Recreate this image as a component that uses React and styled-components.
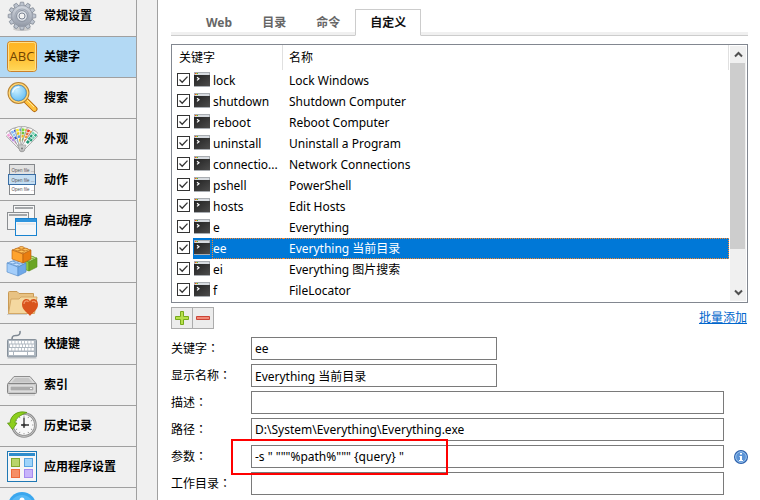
import React, { useState } from 'react';
import styled, { createGlobalStyle, css } from 'styled-components';

const palette = {
  panel: '#f0f0f0',
  line: '#a0a0a0',
  active: '#b3d9f4',
  frame: '#828790',
  input: '#7a7a7a',
  select: '#0078d7',
  dots: '#ff8728',
  link: '#0066cc',
};

const GlobalStyle = createGlobalStyle`
  * {
    box-sizing: border-box;
  }

  body {
    margin: 0;
    overflow: hidden;
    background: #fff;
    color: #000;
    font-family: 'Noto Sans', 'Noto Sans CJK SC', sans-serif;
    font-size: 12px;
    line-height: 16px;
  }

  button, input {
    font: inherit;
    color: inherit;
  }
`;

const Page = styled.div`
  display: flex;
  height: 100vh;
  overflow: hidden;
  background: ${palette.panel};
`;

/* ---------- sidebar ---------- */

const Sidebar = styled.nav`
  flex: none;
  width: 137px;
  overflow: hidden;
  border-right: 1px solid ${palette.line};
`;

const SideList = styled.ul`
  margin: -4px 0 0;
  padding: 0;
  list-style: none;
`;

const SideButton = styled.button`
  display: flex;
  align-items: center;
  gap: 6px;
  width: 100%;
  height: 41px;
  padding: 0 0 0 6px;
  border: 0;
  border-bottom: 1px solid ${palette.line};
  background: ${({ $active }) => ($active ? palette.active : 'transparent')};
  font-weight: 700;
  white-space: nowrap;

  svg {
    flex: none;
    font-weight: 400;
  }
`;

/* ---------- main panel ---------- */

const Main = styled.main`
  flex: 1;
  min-width: 0;
  margin-left: 20px;
  padding: 9px 12px 0 13px;
  border-left: 1px solid ${palette.line};
  background: #fff;
`;

const Tabs = styled.div`
  display: flex;
  height: 27px;
  padding-left: 20px;
  border-bottom: 1px solid #ccc;
  background: linear-gradient(#fff 23px, ${palette.panel} 23px);
`;

const Tab = styled.button`
  height: 27px;
  padding: 0 14px;
  border: 1px solid transparent;
  background: none;
  color: #666;
  font-weight: 700;

  ${({ $active }) => $active && css`
    border-color: #ccc;
    border-bottom-color: #fff;
    background: #fff;
    color: #111;
  `}
`;

const ListFrame = styled.div`
  display: flex;
  margin-top: 8px;
  height: 259px;
  border: 1px solid ${palette.frame};
`;

const Table = styled.table`
  flex: 1;
  min-width: 0;
  table-layout: fixed;
  border-collapse: separate;
  border-spacing: 0;
  height: 256px;
`;

const HeadCell = styled.th`
  width: ${({ $width }) => $width || 'auto'};
  height: 25px;
  padding: 0 0 0 7px;
  border-right: 1px solid #e0e0e0;
  font-weight: 400;
  text-align: left;

  & + & {
    padding-left: 6px;
  }
`;

const KeyCell = styled.td`
  height: 21px;
  padding: 0;
`;

const KeyBox = styled.div`
  display: flex;
  align-items: center;
  height: 21px;
  padding-left: 5px;
`;

const KeyMark = styled.span`
  display: flex;
  align-items: center;
  flex: none;
  width: 19px;
  height: 21px;
  margin-left: 3px;
  padding: 0 0 2px 1px;
  background: ${({ $selected }) => ($selected ? palette.select : 'none')};
`;

const KeyText = styled.span`
  flex: 1;
  height: 21px;
  border: 1px dotted transparent;
  border-right: 0;
  line-height: 19px;

  ${({ $selected }) => $selected && css`
    border-color: ${palette.dots};
    background: ${palette.select};
    color: #fff;
  `}
`;

const NameCell = styled.td`
  height: 21px;
  padding: 0 0 0 6px;
  border: 1px dotted transparent;
  border-left: 0;
  line-height: 19px;

  ${({ $selected }) => $selected && css`
    border-color: ${palette.dots};
    background: ${palette.select};
    color: #fff;
  `}
`;

const CheckLabel = styled.label`
  display: grid;
  flex: none;
  width: 13px;
  height: 13px;
  margin-bottom: 2px;

  > * {
    grid-area: 1 / 1;
  }

  svg {
    pointer-events: none;
  }

  input:not(:checked) + svg {
    visibility: hidden;
  }
`;

const CheckInput = styled.input`
  appearance: none;
  width: 13px;
  height: 13px;
  margin: 0;
  border: 1px solid #333;
  background: #fff;
`;

const ScrollBar = styled.div`
  display: flex;
  flex-direction: column;
  flex: none;
  width: 17px;
  margin: 1px 1px 1px 0;
  border-left: 1px solid #fff;
  background: ${palette.panel};
`;

const ScrollButton = styled.button`
  display: grid;
  place-items: center;
  height: 17px;
  padding: 0;
  border: 0;
  background: none;
`;

const ScrollTrack = styled.div`
  flex: 1;
`;

const ScrollThumb = styled.div`
  height: 84%;
  margin-right: 1px;
  background: #cdcdcd;
`;

const Actions = styled.div`
  display: flex;
  align-items: center;
  justify-content: space-between;
  margin-top: 4px;
  padding-right: 1px;
`;

const ButtonPair = styled.div`
  display: flex;
`;

const ToolButton = styled.button`
  display: grid;
  place-items: center;
  width: 22px;
  height: 22px;
  padding: 0;
  border: 1px solid #acacac;
  background: #ececec;

  & + & {
    margin-left: -1px;
  }
`;

const BatchLink = styled.a`
  color: ${palette.link};
`;

const Form = styled.form`
  display: flex;
  flex-direction: column;
  gap: 4px;
  margin-top: 8px;
`;

const FormRow = styled.div`
  display: flex;
  align-items: center;
  height: 23px;
`;

const FieldLabel = styled.label`
  flex: none;
  width: 80px;
`;

/* the TC face centres the full-width colon in its square */
const Colon = styled.span`
  font-family: 'Noto Sans CJK TC', sans-serif;
  line-height: 1;
`;

const FieldBox = styled.div`
  position: relative;
  z-index: ${({ $raised }) => ($raised ? 1 : 0)};
  flex: ${({ $short }) => ($short ? '0 0 246px' : '1')};
  height: 23px;
`;

const TextInput = styled.input`
  display: block;
  width: 100%;
  height: 23px;
  padding: 0 3px;
  border: 1px solid ${palette.input};
  border-radius: 0;
  background: #fff;
  outline: 0;
`;

const Highlight = styled.div`
  position: absolute;
  top: -6px;
  left: -20px;
  width: 217px;
  height: 36px;
  border: 2px solid #f00;
  pointer-events: none;
`;

const RowEnd = styled.div`
  display: flex;
  justify-content: flex-end;
  flex: none;
  width: 24px;
`;

const InfoButton = styled.button`
  padding: 0;
  border: 0;
  background: none;

  svg {
    display: block;
  }
`;

/* ---------- icons ---------- */

const Icon = ({ children }) => (
  <svg width="32" height="32" viewBox="0 0 32 32" fill="none" aria-hidden="true">{children}</svg>
);

const GearIcon = () => (
  <Icon>
    <defs>
      <linearGradient id="gear" x1="0" y1="0" x2="0" y2="1">
        <stop offset="0" stopColor="#d3d8e0" />
        <stop offset="1" stopColor="#9299a6" />
      </linearGradient>
    </defs>
    <ellipse cx="16" cy="29" rx="9" ry="2" fill="#ccc" />
    {[0, 30, 60, 90, 120, 150, 180, 210, 240, 270, 300, 330].map(a => (
      <path key={a} d="M13.6 6L14.4 2.2h3.2L18.4 6z" fill="#bcc3ce" stroke="#858c98" strokeWidth=".8" transform={`rotate(${a} 16 16)`} />
    ))}
    <circle cx="16" cy="16" r="10.4" fill="url(#gear)" stroke="#8f96a3" strokeWidth=".6" />
    <circle cx="16" cy="16" r="7" stroke="#a2a9b6" strokeWidth="1.2" />
    <circle cx="16" cy="16" r="5.4" fill="#dfe3e9" stroke="#868e9c" />
    <circle cx="16" cy="16" r="3" fill="#f2f2f2" stroke="#7d8594" />
  </Icon>
);

const AbcIcon = () => (
  <Icon>
    <defs>
      <linearGradient id="abc" x1="0" y1="0" x2="0" y2="1">
        <stop offset="0" stopColor="#ffb524" />
        <stop offset=".5" stopColor="#ffbd2e" />
        <stop offset="1" stopColor="#ffd95c" />
      </linearGradient>
    </defs>
    <rect x="1.5" y=".5" width="29" height="30" rx="3" fill="url(#abc)" stroke="#c9812a" />
    <rect x="2.5" y="1.5" width="27" height="28" rx="2" stroke="#ffe08a" />
    <text x="16" y="20" textAnchor="middle" fontFamily="'Open Sans', sans-serif" fontSize="13" fill="#704300">ABC</text>
  </Icon>
);

const SearchIcon = () => (
  <Icon>
    <defs>
      <radialGradient id="lens" cx=".4" cy=".35" r=".7">
        <stop offset="0" stopColor="#c9efff" />
        <stop offset="1" stopColor="#58b7f2" />
      </radialGradient>
    </defs>
    <path d="M20 18.5L28.5 27" stroke="#b56c12" strokeWidth="6" strokeLinecap="round" />
    <path d="M20 18.5L28.5 27" stroke="#ffc23d" strokeWidth="4" strokeLinecap="round" />
    <path d="M21 18L28 25" stroke="#ffe9a0" />
    <circle cx="12.5" cy="11" r="9.5" fill="url(#lens)" stroke="#b98332" strokeWidth="3" />
    <circle cx="12.5" cy="11" r="9.2" stroke="#ffd777" strokeWidth="1.6" />
    <circle cx="12.5" cy="11" r="7.8" stroke="#4b8fc4" strokeWidth=".8" />
    <path d="M6.5 10.5c1-4 4-5.5 7-5.5" stroke="#fff" strokeWidth="1.4" opacity=".8" />
  </Icon>
);

const fanBlades = [
  [-40, ['#f2a0d8', '#b58ae8', '#d86ac0']],
  [-25, ['#7fb2f4', '#2d4fd8', '#8ec8f5']],
  [-9, ['#f6e62a', '#5a9bd8', '#e8c81e']],
  [8, ['#7fdc3c', '#f0b820', '#6cbf3a']],
  [24, ['#ee3f24', '#f59a2c', '#e06a3a']],
  [40, ['#7fd8b8', '#2fa886', '#1f9673']],
];

const SwatchIcon = () => (
  <Icon>
    {fanBlades.map(([angle, colors]) => (
      <g key={angle} transform={`rotate(${angle} 16 26)`}>
        <path d="M12.2 4.2q3.800-1.600 7.600 0L18 28h-4z" fill="#fafafa" stroke="#9c9c9c" strokeWidth=".8" />
        <path d="M13.2 5.5h2.600v2.600h-2.600zM16.400 8.800h2.200v2.600h-2.200z" fill={colors[0]} />
        <path d="M16.400 5.500h2.400v2.600h-2.400zM13.800 12h2.200v2.600h-2.200z" fill={colors[1]} />
        <path d="M13.500 8.800h2.300v2.600h-2.300zM16.200 12h2.200v2.600h-2.200zM14.600 15.400h2.800v3h-2.800z" fill={colors[2]} />
      </g>
    ))}
    <path d="M12 22l8 0-2 6h-4z" fill="#c9c9c9" stroke="#9c9c9c" strokeWidth=".6" />
    <circle cx="16" cy="25.5" r="1" fill="#777" />
  </Icon>
);

const ActionIcon = () => (
  <Icon>
    <rect x="3.5" y=".5" width="25" height="30" fill="#fff" stroke="#85888c" />
    <rect x="4" y="1" width="24" height="9" fill="#e2e2e2" />
    <rect x="2.5" y="10.5" width="27" height="10" fill="#c5def2" stroke="#3a6ea5" />
    {[7.5, 17.5, 26.5].map(y => (
      <text key={y} x="5.5" y={y} fontFamily="'Liberation Sans', sans-serif" fontSize="4.500" fill="#555">Open file ...</text>
    ))}
  </Icon>
);

const WindowsIcon = () => (
  <Icon>
    <rect x="7.5" y=".5" width="21" height="17" fill="#f7f7f7" stroke="#8b8e91" />
    <path d="M9 3h18" stroke="#a4a7aa" strokeWidth="2" />
    <rect x="1.5" y="7.5" width="21" height="17" fill="#f3f3f3" stroke="#8b8e91" />
    <path d="M3 10h18" stroke="#a4a7aa" strokeWidth="2" />
    <rect x="9.5" y="13.5" width="21" height="17" fill="#f4f6f8" stroke="#1883d0" />
    <path d="M10 15.5h20" stroke="#2f95de" strokeWidth="3" />
    <path d="M11 19h18" stroke="#dadde0" />
  </Icon>
);

const Brick = ({ x, y, top, left, right, edge }) => (
  <g transform={`translate(${x} ${y})`} stroke={edge} strokeWidth=".6" strokeLinejoin="round">
    <path d="M0 4L9 1l10 3-8 4z" fill={top} />
    <path d="M0 4l11 4v9L0 13z" fill={left} />
    <path d="M11 8l8-4v9l-8 4z" fill={right} />
    <ellipse cx="5.500" cy="3.500" rx="2.600" ry="1.300" fill={top} />
    <ellipse cx="13.500" cy="3.500" rx="2.600" ry="1.300" fill={top} />
    <ellipse cx="9.500" cy="5.500" rx="2.600" ry="1.300" fill={top} />
    <ellipse cx="9.500" cy="1.800" rx="2.600" ry="1.300" fill={top} />
  </g>
);

const BricksIcon = () => (
  <Icon>
    <Brick x={12} y={8} top="#c4e88a" left="#8dc63f" right="#6aa524" edge="#578a1c" />
    <Brick x={1} y={13} top="#c4e1ff" left="#a3cdfa" right="#6fa8e8" edge="#4f86c6" />
    <Brick x={6} y={0} top="#ffc35c" left="#ffa32e" right="#e97d10" edge="#b35d0c" />
  </Icon>
);

const FolderHeartIcon = () => (
  <Icon>
    <path d="M2.5 26.500V5.500q0-1 1-1h7.500l2 2h14.500v20z" fill="#e8c283" stroke="#c99a55" />
    <path d="M2.5 26.500L5 12h8l2-2h16l-2.500 16.500z" fill="#f4d8a0" stroke="#d3a866" />
    <path d="M1 27.500h20" stroke="#cfcfcf" />
    <path d="M24 29c-2-3-8-6-8-11.500 0-6 6.500-7 8-3 1.500-4 8-3 8 3 0 5.500-6 8.500-8 11.500z" fill="#d9541e" />
    <path d="M18 17c0-3 3-4 4.500-2M26 15c1.500-1.500 3.500-.5 4 1" stroke="#f19a6b" strokeWidth="1.200" />
  </Icon>
);

const KeyboardIcon = () => (
  <Icon>
    <path d="M6 11c0-4 3-3.500 5-3.500s3.500-1.500 3-4.500" stroke="#7d8791" strokeWidth="1.600" />
    <rect x="1.5" y="11.5" width="29" height="17.500" rx="1" fill="#aeb7c0" stroke="#87919b" />
    <path d="M1.5 30h29" stroke="#b9bdc2" />
    {[13, 16.5, 20].map((y, row) => (
      <path key={y} d={`M${3 + row % 2} ${y + 1.2}h${25 - row % 2}`} stroke="#fff" strokeWidth="2.400" strokeDasharray="2.400 .8" />
    ))}
    <path d="M3 25.500h4M8 25.500h13M22 25.500h6" stroke="#fff" strokeWidth="2.800" />
  </Icon>
);

const DriveIcon = () => (
  <Icon>
    <path d="M2 14.500L8 7.500h16l6 7z" fill="#dcdcdc" stroke="#8e8e8e" />
    <path d="M5.5 13.500L9.500 9h13l4 4.500z" fill="#c6c6c6" />
    <rect x="1.5" y="14.500" width="29" height="10" rx="1" fill="#c9c9c9" stroke="#858585" />
    <rect x="4" y="17" width="24" height="5" fill="#ababab" stroke="#efefef" />
    <path d="M24 19.500h2" stroke="#f5f5f5" />
    <path d="M3 26h26" stroke="#c8c8c8" />
  </Icon>
);

const HistoryIcon = () => (
  <Icon>
    <circle cx="18" cy="15" r="11.500" fill="#f8f8f8" stroke="#8d8d8d" strokeWidth="2.600" />
    <circle cx="18" cy="15" r="11.500" stroke="#c6c6c6" />
    {[0, 30, 60, 90, 120, 150, 180, 210, 240, 270, 300, 330].map(a => (
      <path key={a} d="M18 5.500v1.500" stroke="#888" strokeWidth=".8" transform={`rotate(${a} 18 15)`} />
    ))}
    <path d="M18 7.500V18M15 15h8" stroke="#333" strokeWidth="1.300" />
    <circle cx="18" cy="15" r="1.600" fill="#333" />
    <path d="M21 2.500C12 0 4.500 5 4 13H1.500l5 6.500 4.500-6.500H9C9.500 8.500 14 5 21 2.500z" fill="#8cce1c" stroke="#5b9410" strokeWidth=".8" />
  </Icon>
);

const AppsIcon = () => (
  <Icon>
    <rect x="1.5" y=".5" width="29" height="30" fill="#f6f6f6" stroke="#1f78b4" />
    <rect x="3" y="2" width="26" height="3" fill="#2e8ccc" />
    <rect x="5.5" y="7.5" width="8" height="8" fill="#b8d46a" stroke="#83a82c" />
    <rect x="18.5" y="7.5" width="8" height="8" fill="#9fd4fa" stroke="#5aa5e0" />
    <rect x="5.5" y="18.5" width="8" height="8" fill="#f58f66" stroke="#ee6a3a" />
    <rect x="18.5" y="18.5" width="8" height="8" fill="#c8b4fa" stroke="#a58bf0" />
  </Icon>
);

const AboutIcon = () => (
  <Icon>
    <circle cx="16" cy="14" r="14" fill="#3ba7ee" />
    <circle cx="16" cy="15" r="12" fill="#56b9f6" />
    <circle cx="16" cy="8" r="2.500" fill="#fff" />
  </Icon>
);

const ConsoleIcon = () => (
  <svg width="16" height="15" viewBox="0 0 16 15" aria-hidden="true">
    <defs>
      <linearGradient id="console" x1="0" y1="0" x2="1" y2="1">
        <stop offset="0" stopColor="#222" />
        <stop offset="1" stopColor="#4c4c4c" />
      </linearGradient>
    </defs>
    <rect x="0" y="0" width="16" height="15" fill="#a9adb2" />
    <rect x="1" y="1" width="14" height="2" fill="#d7dbe0" />
    <rect x="1" y="1" width="1" height="1" fill="#e5532d" />
    <rect x="2" y="1" width="1" height="1" fill="#e8b21d" />
    <rect x="3" y="1" width="1" height="1" fill="#4cae3c" />
    <rect x="0" y="3" width="16" height="11" fill="url(#console)" />
    <path d="M3 5.200l2 1.600-2 1.600" fill="none" stroke="#fff" strokeWidth="1.200" />
  </svg>
);

const CheckMark = () => (
  <svg width="13" height="13" viewBox="0 0 13 13" fill="none" aria-hidden="true">
    <path d="M2.5 6.500l2.700 2.700 5.300-5.600" stroke="#333" strokeWidth="1.300" />
  </svg>
);

const Chevron = ({ down }) => (
  <svg width="9" height="7" viewBox="0 0 9 7" fill="none" aria-hidden="true">
    <path d={down ? 'M1 1.500l3.500 3.500L8 1.500' : 'M1 5.500L4.500 2 8 5.500'} stroke="#505050" strokeWidth="2" />
  </svg>
);

const PlusIcon = () => (
  <svg width="16" height="16" viewBox="0 0 16 16" aria-hidden="true">
    <path d="M6.5 1.500h3v5h5v3h-5v5h-3v-5h-5v-3h5z" fill="#b6e04c" stroke="#76a91a" />
  </svg>
);

const MinusIcon = () => (
  <svg width="16" height="16" viewBox="0 0 16 16" aria-hidden="true">
    <path d="M1.5 6.500h13v3h-13z" fill="#f08a78" stroke="#cb4436" />
  </svg>
);

const InfoIcon = () => (
  <svg width="14" height="14" viewBox="0 0 14 14" aria-hidden="true">
    <circle cx="7" cy="7" r="6.400" fill="#5b93d6" stroke="#2f62ac" strokeWidth="1.200" />
    <circle cx="7" cy="7" r="5.300" fill="none" stroke="#9cc5ee" />
    <path d="M6 3h2v1.500H6zM5.500 6H8v4h1v1H5v-1h1V7h-.5z" fill="#fff" />
  </svg>
);

/* ---------- data ---------- */

const sections = [
  { label: '常规设置', icon: GearIcon },
  { label: '关键字', icon: AbcIcon },
  { label: '搜索', icon: SearchIcon },
  { label: '外观', icon: SwatchIcon },
  { label: '动作', icon: ActionIcon },
  { label: '启动程序', icon: WindowsIcon },
  { label: '工程', icon: BricksIcon },
  { label: '菜单', icon: FolderHeartIcon },
  { label: '快捷键', icon: KeyboardIcon },
  { label: '索引', icon: DriveIcon },
  { label: '历史记录', icon: HistoryIcon },
  { label: '应用程序设置', icon: AppsIcon },
  { label: '', icon: AboutIcon },
];

const tabs = ['Web', '目录', '命令', '自定义'];

const keywords = [
  ['lock', 'Lock Windows'],
  ['shutdown', 'Shutdown Computer'],
  ['reboot', 'Reboot Computer'],
  ['uninstall', 'Uninstall a Program'],
  ['connectio...', 'Network Connections'],
  ['pshell', 'PowerShell'],
  ['hosts', 'Edit Hosts'],
  ['e', 'Everything'],
  ['ee', 'Everything 当前目录'],
  ['ei', 'Everything 图片搜索'],
  ['f', 'FileLocator'],
];

const fields = [
  { id: 'keyword', label: '关键字', value: 'ee', short: true },
  { id: 'title', label: '显示名称', value: 'Everything 当前目录', short: true },
  { id: 'description', label: '描述', value: '' },
  { id: 'path', label: '路径', value: 'D:\\System\\Everything\\Everything.exe' },
  { id: 'params', label: '参数', value: '-s " """%path%""" {query} "', marked: true },
  { id: 'folder', label: '工作目录', value: '' },
];

const App = () => {
  const [section, setSection] = useState(1);
  const [tab, setTab] = useState('自定义');
  const [selected, setSelected] = useState('ee');

  const sideItems = sections.map(({ label, icon: SectionIcon }, i) => (
    <li key={i}>
      <SideButton type="button" $active={i === section} onClick={() => setSection(i)}>
        <SectionIcon />
        {label}
      </SideButton>
    </li>
  ));

  const rows = keywords.map(([key, name]) => {
    const isSelected = key === selected;
    return (
      <tr key={key} onClick={() => setSelected(key)}>
        <KeyCell>
          <KeyBox>
            <CheckLabel htmlFor={`check-${key}`}>
              <CheckInput id={`check-${key}`} type="checkbox" defaultChecked />
              <CheckMark />
            </CheckLabel>
            <KeyMark $selected={isSelected}><ConsoleIcon /></KeyMark>
            <KeyText $selected={isSelected}>{key}</KeyText>
          </KeyBox>
        </KeyCell>
        <NameCell $selected={isSelected}>{name}</NameCell>
      </tr>
    );
  });

  return (
    <Page>
      <GlobalStyle />
      <Sidebar>
        <SideList>{sideItems}</SideList>
      </Sidebar>
      <Main>
        <Tabs role="tablist">
          {tabs.map(item => (
            <Tab key={item} type="button" role="tab" $active={item === tab} onClick={() => setTab(item)}>
              {item}
            </Tab>
          ))}
        </Tabs>
        <ListFrame>
          <Table>
            <thead>
              <tr>
                <HeadCell $width="111px">关键字</HeadCell>
                <HeadCell>名称</HeadCell>
              </tr>
            </thead>
            <tbody>{rows}</tbody>
          </Table>
          <ScrollBar>
            <ScrollButton type="button"><Chevron /></ScrollButton>
            <ScrollTrack><ScrollThumb /></ScrollTrack>
            <ScrollButton type="button"><Chevron down /></ScrollButton>
          </ScrollBar>
        </ListFrame>
        <Actions>
          <ButtonPair>
            <ToolButton type="button"><PlusIcon /></ToolButton>
            <ToolButton type="button"><MinusIcon /></ToolButton>
          </ButtonPair>
          <BatchLink href="#">批量添加</BatchLink>
        </Actions>
        <Form>
          {fields.map(({ id, label, value, short, marked }) => (
            <FormRow key={id}>
              <FieldLabel htmlFor={id}>{label}<Colon>：</Colon></FieldLabel>
              <FieldBox $short={short} $raised={marked}>
                <TextInput id={id} type="text" defaultValue={value} />
                {marked && <Highlight />}
              </FieldBox>
              <RowEnd>
                {marked && <InfoButton type="button"><InfoIcon /></InfoButton>}
              </RowEnd>
            </FormRow>
          ))}
        </Form>
      </Main>
    </Page>
  );
};

export default App;
